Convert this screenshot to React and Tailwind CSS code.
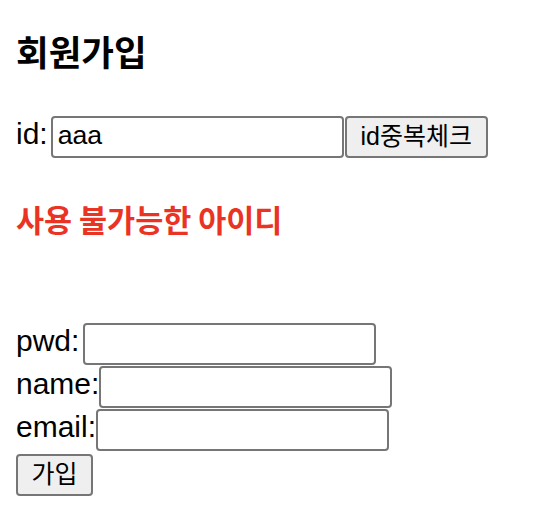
import React, { useState } from "react";

const Row = ({ label, children }) => (
  <div className="flex items-baseline h-[42px] mb-[1px]">
    <span className="text-[30px] leading-[34px]">{label}</span>
    {children}
  </div>
);

const inputCls =
  "w-[293px] h-[42px] border-2 border-[#767676] rounded-[4px] bg-white pl-[5px] pb-[4px] text-[26.67px] leading-[31px] outline-none";

const btnCls =
  "h-[42px] border-2 border-[#767676] rounded-[4px] bg-[#efefef] pb-[2px] text-[25px] leading-[30px]";

export default function App() {
  const [id, setId] = useState("aaa");
  const [pwd, setPwd] = useState("");
  const [name, setName] = useState("");
  const [email, setEmail] = useState("");

  return (
    <div className="bg-white min-h-[532px] px-4 pt-[29px] text-black font-['Liberation_Sans','Noto_Sans_CJK_KR',sans-serif]">
      <h3 className="font-['Noto_Sans_CJK_KR',sans-serif] text-[35.5px] leading-[44px] font-bold">회원가입</h3>
      <form onSubmit={(e) => e.preventDefault()}>
        <div className="flex items-baseline mt-[43px] h-[42px]">
          <span className="text-[30px] leading-[34px] mr-[3px]">id:</span>
          <div className="flex items-start">
            <input className={inputCls} value={id} onChange={(e) => setId(e.target.value)} />
            <button type="button" className={btnCls + " w-[143px] ml-[1px]"}>
              id중복체크
            </button>
          </div>
        </div>
        <p className="mt-[41px] font-['Noto_Sans_CJK_KR',sans-serif] text-[30.5px] leading-[40px] font-bold text-[#ea3323]">
          사용 불가능한 아이디
        </p>
        <div className="mt-[84px]">
          <Row label="pwd:">
            <input type="password" className={inputCls + " ml-[4px]"} value={pwd} onChange={(e) => setPwd(e.target.value)} />
          </Row>
          <Row label="name:">
            <input className={inputCls} value={name} onChange={(e) => setName(e.target.value)} />
          </Row>
          <Row label="email:">
            <input className={inputCls} value={email} onChange={(e) => setEmail(e.target.value)} />
          </Row>
        </div>
        <button type="submit" className={btnCls + " mt-[2px] w-[77px]"}>
          가입
        </button>
      </form>
    </div>
  );
}
